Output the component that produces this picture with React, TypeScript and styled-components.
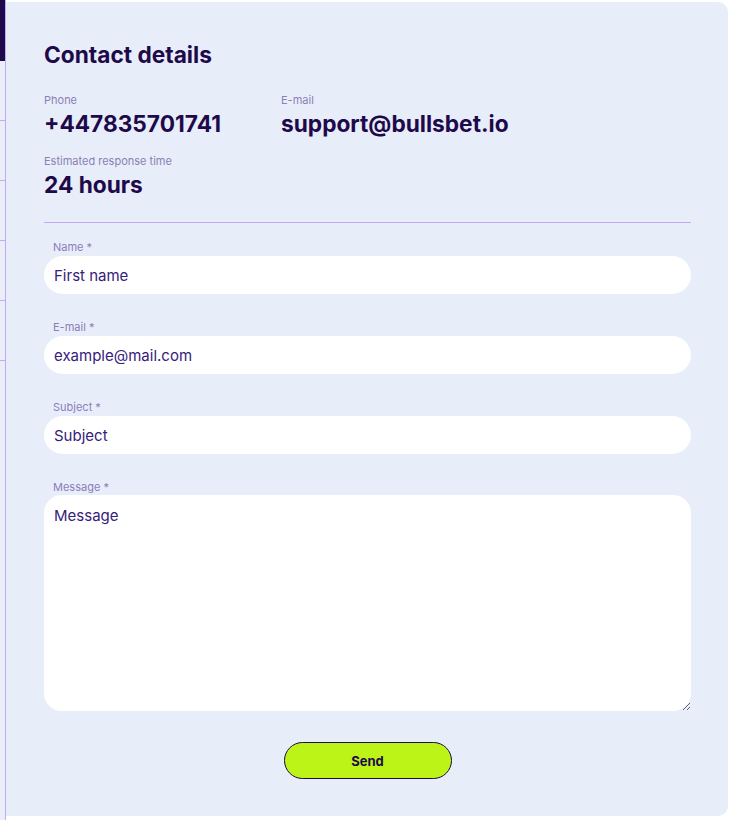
import { FC } from "react";
import styled, { createGlobalStyle } from "styled-components";

const GlobalStyle = createGlobalStyle`
  html, body {
    margin: 0;
    padding: 0;
    background: #ffffff;
    font-family: Inter, "Noto Sans", sans-serif;
  }
  * {
    box-sizing: border-box;
  }
`;

const Page = styled.div`
  display: flex;
  align-items: flex-start;
  width: 734px;
  height: 820px;
  overflow: hidden;
`;

const SideRail = styled.nav`
  width: 6px;
  height: 820px;
  flex-shrink: 0;
  background: #e9eff9;
  border-right: 1px solid #c8a8f2;
  display: flex;
  flex-direction: column;
`;

const RailItem = styled.div<{ $active?: boolean }>`
  height: ${(p) => (p.$active ? "61px" : "60px")};
  background: ${(p) => (p.$active ? "#1e0a4b" : "transparent")};
  border-bottom: ${(p) => (p.$active ? "none" : "1px solid #c8a8f2")};
`;

const Card = styled.section`
  margin-top: 2px;
  width: 722px;
  height: 814px;
  background: #e8eef9;
  border-radius: 0 10px 10px 0;
  padding: 39px 37px 0 38px;
`;

const Title = styled.h2`
  margin: 0;
  font-size: 22.7px;
  line-height: 28px;
  font-weight: 700;
  color: #1e0a4b;
`;

const InfoGrid = styled.div`
  display: grid;
  grid-template-columns: 237px auto;
  row-gap: 16px;
  margin-top: 24px;
`;

const InfoItem = styled.div`
  display: flex;
  flex-direction: column;
  gap: 3px;
`;

const InfoLabel = styled.span`
  font-size: 11px;
  line-height: 14px;
  color: #8a80b5;
`;

const InfoValue = styled.span`
  font-size: 22.7px;
  line-height: 28px;
  font-weight: 700;
  color: #1e0a4b;
`;

const Divider = styled.div`
  margin-top: 23px;
  height: 1px;
  background: #c6a6f4;
`;

const Form = styled.form`
  display: flex;
  flex-direction: column;
  gap: 26px;
  margin-top: 17px;
`;

const Field = styled.label`
  display: flex;
  flex-direction: column;
  gap: 2px;
`;

const FieldLabel = styled.span`
  padding-left: 9px;
  font-size: 11px;
  line-height: 14px;
  color: #8c7cbb;
`;

const TextInput = styled.input`
  height: 38px;
  border: none;
  border-radius: 19px;
  background: #ffffff;
  padding: 0 10px;
  font-family: Inter, "Noto Sans", sans-serif;
  font-size: 15px;
  color: #36217a;
  outline: none;

  &::placeholder {
    color: #36217a;
    opacity: 1;
  }
`;

const TextArea = styled.textarea`
  height: 216px;
  margin-top: -1px;
  border: none;
  border-radius: 18px;
  background: #ffffff;
  padding: 12px 10px;
  font-family: Inter, "Noto Sans", sans-serif;
  font-size: 15px;
  line-height: 18px;
  color: #36217a;
  outline: none;
  resize: vertical;

  &::placeholder {
    color: #36217a;
    opacity: 1;
  }
`;

const Actions = styled.div`
  display: flex;
  justify-content: center;
  margin-top: 5px;
`;

const SendButton = styled.button`
  width: 168px;
  height: 37px;
  border: 1px solid #1e0a4b;
  border-radius: 19px;
  background: #bdf417;
  font-family: Inter, "Noto Sans", sans-serif;
  font-size: 13px;
  font-weight: 700;
  color: #1e0a4b;
  cursor: pointer;
`;

const fields = [
  { label: "Name *", placeholder: "First name", type: "text" },
  { label: "E-mail *", placeholder: "example@mail.com", type: "email" },
  { label: "Subject *", placeholder: "Subject", type: "text" },
];

const App: FC = () => {
  return (
    <>
      <GlobalStyle />
      <Page>
        <SideRail>
          <RailItem $active />
          <RailItem />
          <RailItem />
          <RailItem />
          <RailItem />
          <RailItem />
        </SideRail>
        <Card>
          <Title>Contact details</Title>
          <InfoGrid>
            <InfoItem>
              <InfoLabel>Phone</InfoLabel>
              <InfoValue>+447835701741</InfoValue>
            </InfoItem>
            <InfoItem>
              <InfoLabel>E-mail</InfoLabel>
              <InfoValue>support@bullsbet.io</InfoValue>
            </InfoItem>
            <InfoItem>
              <InfoLabel>Estimated response time</InfoLabel>
              <InfoValue>24 hours</InfoValue>
            </InfoItem>
          </InfoGrid>
          <Divider />
          <Form onSubmit={(e) => e.preventDefault()}>
            {fields.map((f) => (
              <Field key={f.label}>
                <FieldLabel>{f.label}</FieldLabel>
                <TextInput type={f.type} placeholder={f.placeholder} />
              </Field>
            ))}
            <Field>
              <FieldLabel>Message *</FieldLabel>
              <TextArea placeholder="Message" />
            </Field>
            <Actions>
              <SendButton type="submit">Send</SendButton>
            </Actions>
          </Form>
        </Card>
      </Page>
    </>
  );
};

export default App;
